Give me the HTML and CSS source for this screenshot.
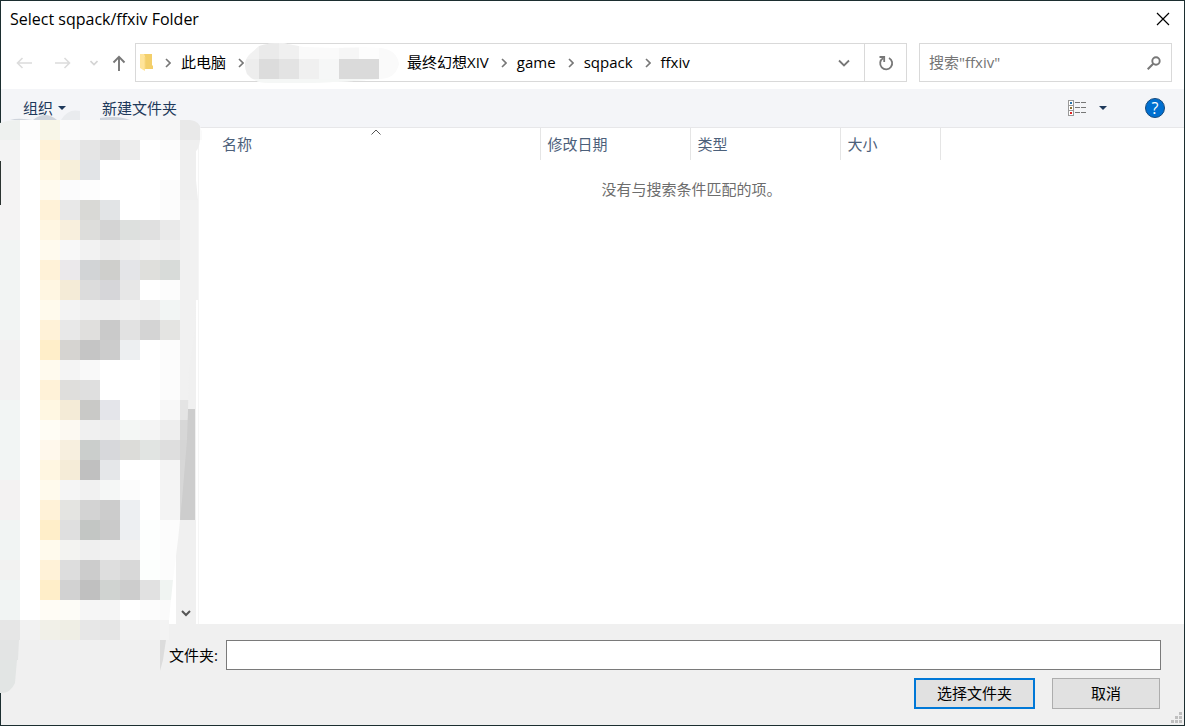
FILE: index.html
```html
<!DOCTYPE html>
<html lang="zh-CN">
<head>
<meta charset="utf-8">
<title>Select sqpack/ffxiv Folder</title>
<link rel="stylesheet" href="styles.css">
</head>
<body>
<div class="dialog">
  <header class="titlebar">
    <h1 class="title">Select sqpack/ffxiv Folder</h1>
    <button class="icon-button close" aria-label="关闭"><svg width="14" height="14" viewBox="0 0 14 14"><path d="M1 1 13 13M13 1 1 13" fill="none" stroke="#000" stroke-width="1.2"/></svg></button>
  </header>

  <nav class="navbar">
    <div class="history">
      <button class="icon-button" aria-label="后退"><svg width="16" height="12" viewBox="0 0 16 12"><path d="M16 6H2M6.500 1 1.500 6 6.500 11" fill="none" stroke="#dcdcdc" stroke-width="1.600"/></svg></button>
      <button class="icon-button forward" aria-label="前进"><svg width="16" height="12" viewBox="0 0 16 12"><path d="M0 6H14M9.500 1 14.500 6 9.500 11" fill="none" stroke="#dcdcdc" stroke-width="1.600"/></svg></button>
      <button class="icon-button recent" aria-label="最近位置"><svg width="8" height="6" viewBox="0 0 8 6"><path d="M.5 1 4 4.500 7.500 1" fill="none" stroke="#d4d4d4" stroke-width="1.600"/></svg></button>
      <button class="icon-button up" aria-label="上移"><svg width="14" height="16" viewBox="0 0 14 16"><path d="M7 16V2M1.500 7.500 7 1.800 12.500 7.500" fill="none" stroke="#777" stroke-width="1.900"/></svg></button>
    </div>
    <div class="address">
      <svg class="folder" width="13" height="17" viewBox="0 0 13 17"><path d="M2 0H12V11L13 12V15H3Z" fill="#f3cf6b"/><path d="M0 0H4L5 2V17L0 14Z" fill="#ffe49a"/><path d="M5 3V15" stroke="#f8d880" stroke-width="1"/></svg>
      <svg class="crumb-arrow" width="6" height="10" viewBox="0 0 6 10"><path d="M1 1 5 5 1 9" /></svg>
      <a class="crumb" href="#">此电脑</a>
      <svg class="crumb-arrow" width="6" height="10" viewBox="0 0 6 10"><path d="M1 1 5 5 1 9" /></svg>
      <svg class="crumb-mask" width="156" height="40" viewBox="0 0 156 40" aria-hidden="true">
        <defs><clipPath id="crumb-shape"><path d="M15 3Q23 0 38 0L60 4 90 5Q118 4 137 5 153 7 155 21 152 35 137 36L110 38 70 40H25Q10 40 3 31-2 20 5 12Z"/></clipPath></defs>
        <g clip-path="url(#crumb-shape)" shape-rendering="crispEdges">
          <path fill="#fafafa" d="M0 0H156V40H0Z"/><path fill="#f1f1f1" d="M0 0H15V16H0Z"/><path fill="#eaeaea" d="M15 0H35V16H15Z"/><path fill="#f0f0f0" d="M35 0H55V16H35Z"/><path fill="#f6f6f6" d="M95 0H115V16H95Z"/><path fill="#fdfdfd" d="M115 0H135V16H115Z"/>
          <path fill="#ededed" d="M0 16H15V36H0Z"/><path fill="#dcdcdc" d="M15 16H35V36H15Z"/><path fill="#e3e3e3" d="M35 16H55V36H35Z"/><path fill="#f0f0f0" d="M55 16H75V36H55Z"/><path fill="#f6f7f7" d="M75 16H95V36H75Z"/><path fill="#dadada" d="M95 16H135V36H95Z"/><path fill="#f5f7f6" d="M0 36H156V40H0Z"/>
        </g>
      </svg>
      <a class="crumb" href="#">最终幻想XIV</a>
      <svg class="crumb-arrow" width="6" height="10" viewBox="0 0 6 10"><path d="M1 1 5 5 1 9" /></svg>
      <a class="crumb" href="#">game</a>
      <svg class="crumb-arrow" width="6" height="10" viewBox="0 0 6 10"><path d="M1 1 5 5 1 9" /></svg>
      <a class="crumb" href="#">sqpack</a>
      <svg class="crumb-arrow" width="6" height="10" viewBox="0 0 6 10"><path d="M1 1 5 5 1 9" /></svg>
      <a class="crumb" href="#">ffxiv</a>
      <button class="icon-button expand" aria-label="展开"><svg width="12" height="8" viewBox="0 0 12 8"><path d="M1 1.500 6 6.500 11 1.500" fill="none" stroke="#777" stroke-width="1.800"/></svg></button>
      <button class="icon-button refresh" aria-label="刷新"><svg width="16" height="16" viewBox="0 0 16 16"><path d="M5 3.200A6 6 0 1 0 11 3M1.500 2H6.200V7" fill="none" stroke="#777" stroke-width="1.800"/></svg></button>
    </div>
    <div class="search">
      <input class="search-input" type="text" aria-label="搜索" placeholder='搜索"ffxiv"'>
      <svg width="14" height="14" viewBox="0 0 14 14"><circle cx="9" cy="5" r="3.700" fill="none" stroke="#777" stroke-width="1.900"/><path d="M6.200 7.800.7 13.300" stroke="#777" stroke-width="2"/></svg>
    </div>
  </nav>

  <div class="toolbar">
    <button class="tool organize">组织 <svg width="8" height="4" viewBox="0 0 8 4"><path d="M0 0H8L4 4Z" fill="#1e395b"/></svg></button>
    <button class="tool">新建文件夹</button>
    <button class="icon-button view" aria-label="更改视图"><svg width="18" height="16" viewBox="0 0 18 16" shape-rendering="crispEdges"><path d="M.5.5H5.500V15.500H.5ZM.5 5.500H5.500M.5 10.500H5.500" fill="#fff" stroke="#999"/><path d="M7 2.500H12M13 2.500H18M7 7.500H12M13 7.500H18M7 12.500H12M13 12.500H18" stroke="#777"/><path fill="#2774ad" d="M2 2H4V4H2Z"/><path fill="#8b7031" d="M2 7H4V9H2Z"/><path fill="#d22" d="M2 12H4V14H2Z"/></svg></button>
    <button class="icon-button view-menu" aria-label="更多选项"><svg width="8" height="4" viewBox="0 0 8 4"><path d="M0 0H8L4 4Z" fill="#1e395b"/></svg></button>
    <button class="help" aria-label="帮助">?</button>
  </div>

  <main class="content">
    <aside class="tree">
      <div class="scrollbar"><svg width="10" height="7" viewBox="0 0 10 7"><path d="M1 1 5 5 9 1" fill="none" stroke="#555" stroke-width="2"/></svg></div>
    </aside>
    <section class="files">
      <table class="list">
        <colgroup><col class="col-name"><col class="col-date"><col class="col-type"><col class="col-size"><col></colgroup>
        <thead><tr>
          <th class="sorted">名称<svg class="sort" width="10" height="6" viewBox="0 0 10 6"><path d="M.5 5.500 5 1 9.500 5.500" fill="none" stroke="#555"/></svg></th>
          <th>修改日期</th><th>类型</th><th>大小</th><td></td>
        </tr></thead>
      </table>
      <p class="empty">没有与搜索条件匹配的项。</p>
    </section>
  </main>

  <footer class="footer">
    <div class="field">
      <label for="folder">文件夹:</label>
      <input class="folder-input" id="folder" type="text">
    </div>
    <div class="actions">
      <button class="button primary">选择文件夹</button>
      <button class="button">取消</button>
    </div>
    <svg class="grip" width="11" height="11" viewBox="0 0 11 11" aria-hidden="true"><path fill="#bfbfbf" d="M8 0h3v3H8ZM4 4h3v3H4ZM8 4h3v3H8ZM0 8h3v3H0ZM4 8h3v3H4ZM8 8h3v3H8Z"/></svg>
  </footer>

  <svg class="mosaic" width="202" height="590" viewBox="0 110 202 590" aria-hidden="true">
    <defs><clipPath id="tree-shape"><path d="M0 123Q8 120 20 120H190Q200 121 201 130L205 133V140H200Q199 149 196 151V180L198 200V300L196 300 195 330 189 370 188 410 187 440 182 500 178 540 173 580 169 620V640L0 640Z"/></clipPath></defs>
    <path fill="#cfd4dc" d="M10 120Q17 118 24 119L33 120ZM33 120Q45 110 57 120ZM100 120V118Q118 115 130 120Z"/>
    <path fill="#e9ebee" d="M61 120Q68 108 80 111V120Z"/>
    <path fill="#cdcdcd" d="M180 409H195V520H180Z"/>
    <g id="cells" clip-path="url(#tree-shape)" shape-rendering="crispEdges"></g>
    <path fill="#2b3330" d="M0 161H1V205H0Z"/>
    <path fill="#e3e4e4" d="M0 640H19L18 660H0Z"/><path fill="#e2e5e4" d="M0 660H17L15 683Q10 694 0 693Z"/>
    <path fill="#dcdcdc" d="M160 640H166L163 660 160 671Z"/>
  </svg>
</div>
<script src="mosaic.js"></script>
</body>
</html>
```
FILE: mosaic.js
```javascript
// Colours of the pixelated tree, 20px cells, one string per row.
const rows = `
eef1ef fdfdfd f8f6e8 fafafa f9f9f9 f7f7f7 f9f9f9 f9f9f9 f7f7f7 e9e9e9 fafafa
f3f3f3 ffffff fff2d8 efefef e5e5e5 dddddd ededed ffffff fcfcfc efefef
f3f3f3 ffffff fff7e3 f7efda e2e4e7 ffffff ffffff ffffff ffffff efefef
f4f3f3 ffffff fffaee fbfbfc fdfdfd ffffff ffffff ffffff fcfcfc efefef
f4f3f3 ffffff fff2d8 e8e8e8 d9d9d6 e2e4e6 ffffff ffffff fcfcfc f1f1f1
f4f3f3 ffffff fff6e2 f8efdd dddddb d4d4d4 dde0de e0e0e0 eaeaea f1f1f1
f2f4f3 ffffff fffaee f8f8f8 f2f2f2 ececec eeeeee f1f1f1 eeeeee f1f1f1
f2f4f3 ffffff fff2d8 ebe9eb d2d4d6 cfcfcc e4e5e8 dfdfdc d8dbd9 f1f1f1
f2f4f3 ffffff fff6e2 f4ebd7 dcdcdc d6d6d9 e7e7e7 ffffff fcfcfc f1f1f1
f2f4f3 ffffff fffaed f3f3f3 f0f0f0 efefef f1f1f1 eeeeee f2f5f4 f1f1f1
f2f4f3 ffffff fff2d8 e8e8e8 e0dfdd cacaca e2e2e2 d4d4d4 e4e4e2 f1f1f1
f2f2f2 ffffff ffeec9 d6d4d1 c5c5c5 cccccc edeff1 ffffff fcfcfc f1f1f1
f2f2f2 ffffff fffaee f4f4f4 f9f9f9 ffffff ffffff ffffff fcfcfc f1f1f1
f2f2f2 ffffff fff2d8 dfdedc dfdfdf ffffff ffffff ffffff fcfcfc f1f1f1
f2f5f4 ffffff fff7e2 f4ebd7 c9c9c7 e4e5ea ffffff ffffff f8f8f8 e4e4e4
f2f5f4 ffffff fffdf5 fcf9f2 f0f0f0 eeeeee f4f7f5 f4f4f4 eeeeee d7d7d7
f2f5f4 ffffff fff8ec f7efdf cbcecc d7d8db dcdcd9 e1e4e2 dedede d5d5d5
f2f5f4 ffffff fff6e1 f5ecd8 c0c0c0 e5e7e9 ffffff ffffff f4f4f4 d7d7d7
f3f2f2 ffffff fffaed f5f5f5 f1f1f1 f5f7f6 fcfcfc ffffff f4f4f4 d7d7d7
f3f2f2 ffffff fff2d8 e4e4e1 d3d3d3 cccccc edeff2 ffffff f4f4f4 d7d7d7
f1f4f3 ffffff ffeec9 dfdfdf c3c6c4 cacaca edeff2 fdfffe fcfcfc fcfcfc
f1f4f3 ffffff fffaed f3f3f1 efefef f1f1f1 f1f1f1 fdfffe fcfcfc fcfcfc
f2f2f1 ffffff fff2d8 dddddd cccccc dedede d8d8d8 fcfffd fcfcfc fcfcfc
f1f4f3 ffffff ffeec9 d2d2d2 c0c0c0 d0d3d1 cdcdcd e1e1e1 f0f4f2 fcfcfc
f1f4f3 ffffff fffcf5 fdfcf7 f6f6f6 f5f5f5 ffffff fcfcfc fafafa fcfcfc
e6e6e6 f2f2f2 f1f0e8 efeee5 e7e7e7 e5e5e5 f2f2f2 f2f2f2 f3f3f3 f3f3f3
`.trim().split("\n");

const group = document.getElementById("cells");
rows.forEach((row, r) => row.split(" ").forEach((color, c) => {
  const cell = document.createElementNS("http://www.w3.org/2000/svg", "rect");
  cell.setAttribute("x", c * 20);
  cell.setAttribute("y", 120 + r * 20);
  cell.setAttribute("width", 20);
  cell.setAttribute("height", 20);
  cell.setAttribute("fill", "#" + color);
  group.append(cell);
}));
```
FILE: styles.css
```css
* { box-sizing: border-box; }
body {
  margin: 0;
  font: 15px/20px "Open Sans", "Noto Sans CJK SC", sans-serif;
  color: #000;
  background: #fff;
}
button, input { font: inherit; color: inherit; }
button { padding: 0; }
svg { display: block; flex: none; }
.dialog {
  position: relative;
  display: flex;
  flex-direction: column;
  min-height: 100vh;
  border: 1px solid #1c2e30;
}
.icon-button {
  display: flex;
  align-items: center;
  justify-content: center;
  border: 0;
  background: none;
}
.titlebar {
  display: flex;
  align-items: center;
  justify-content: space-between;
  height: 36px;
  padding: 0 14px 0 9px;
}
.title { margin: 0; font-size: 16px; font-weight: 400; }
.navbar {
  display: flex;
  padding: 6px 12px 7px 0;
}
.history {
  display: flex;
  width: 134px;
  padding-left: 15px;
}
.forward { margin-left: 23px; }
.recent { margin-left: 19px; }
.up { margin-left: 14px; }
.address {
  display: flex;
  flex: 1;
  align-items: center;
  height: 39px;
  border: 1px solid #d9d9d9;
  padding-left: 4px;
}
.crumb { padding-bottom: 2px; color: #000; text-decoration: none; white-space: nowrap; }
.crumb-arrow { margin: 0 10px 0 12px; fill: none; stroke: #777; stroke-width: 1.6; }
.crumb-mask { margin: 0 7px 0 -10px; }
.expand { margin-left: auto; width: 40px; align-self: stretch; }
.refresh { width: 42px; align-self: stretch; border-left: 1px solid #d9d9d9; }
.search {
  display: flex;
  align-items: center;
  width: 253px;
  height: 39px;
  margin-left: 12px;
  padding: 0 10px 0 9px;
  border: 1px solid #d9d9d9;
}
.search-input { flex: 1; min-width: 0; padding: 0 0 2px; border: 0; outline: 0; }
.search-input::placeholder { color: #757575; opacity: 1; }
.toolbar {
  display: flex;
  align-items: center;
  height: 39px;
  padding: 0 19px 0 22px;
  background: #f4f5f8;
  border-bottom: 1px solid #e7e7e9;
}
.tool {
  display: flex;
  align-items: center;
  gap: 5px;
  border: 0;
  background: none;
  color: #1e395b;
}
.organize { margin-right: 36px; }
.view { margin-left: auto; }
.view-menu { margin: 0 38px 0 13px; }
.help {
  width: 20px;
  height: 20px;
  border: 1px solid #15497c;
  border-radius: 50%;
  background: #006fd0;
  color: #fff;
  font-size: 16px;
  line-height: 18px;
}
.content { display: flex; flex: 1; }
.tree {
  display: flex;
  justify-content: flex-end;
  width: 198px;
  padding-right: 2px;
  border-right: 1px solid #f5f5f5;
}
.scrollbar {
  display: flex;
  align-items: flex-end;
  justify-content: center;
  width: 20px;
  padding-bottom: 7px;
  background: #f0f0f0;
}
.files { flex: 1; }
.list { width: 100%; table-layout: fixed; border-collapse: collapse; }
.col-name { width: 341px; }
.col-date, .col-type { width: 150px; }
.col-size { width: 100px; }
.list th {
  position: relative;
  height: 32px;
  padding: 0 7px;
  border-right: 1px solid #e5e5e5;
  color: #4c607a;
  font-weight: 400;
  text-align: left;
}
.list .sorted { padding-left: 23px; }
.sort { position: absolute; top: 1px; left: 50%; margin-left: 2px; }
.empty { margin: 0; padding-top: 19px; text-align: center; color: #6d6d6d; }
.footer {
  position: relative;
  padding: 16px 23px 16px 168px;
  background: #f0f0f0;
}
.field { display: flex; align-items: center; gap: 8px; }
.folder-input {
  flex: 1;
  min-width: 0;
  height: 30px;
  border: 1px solid #7a7a7a;
  background: #fff;
}
.actions { display: flex; justify-content: flex-end; gap: 17px; padding: 8px 1px 0 0; }
.button {
  width: 108px;
  height: 31px;
  padding-bottom: 2px;
  border: 1px solid #adadad;
  background: #e1e1e1;
}
.primary { width: 121px; border: 2px solid #0078d7; }
.grip { position: absolute; right: 2px; bottom: 2px; }
.mosaic { position: absolute; top: 109px; left: -1px; pointer-events: none; }
```
